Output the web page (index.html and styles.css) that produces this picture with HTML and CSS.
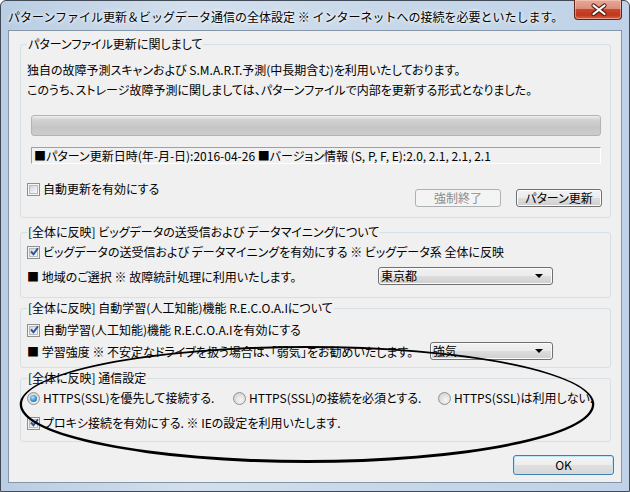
FILE: index.html
```html
<!DOCTYPE html>
<html lang="ja">
<head>
    <meta charset="UTF-8">
    <title>パターンファイル更新＆ビッグデータ通信の全体設定</title>
    <link rel="stylesheet" href="styles.css">
</head>
<body>
<div class="window">
    <div class="titlebar">
        <span class="title">パターンファイル更新＆ビッグデータ通信の全体設定 ※ インターネットへの接続を必要といたします。</span>
        <div class="close">
            <svg width="48" height="19" viewBox="0 0 48 19">
                <path d="M18.5 5.5 L29.5 14 M29.5 5.5 L18.5 14" stroke="#5a1d12" stroke-width="4.2" stroke-linecap="round"/>
                <path d="M18.5 5.5 L29.5 14 M29.5 5.5 L18.5 14" stroke="#ffffff" stroke-width="2.2" stroke-linecap="round"/>
            </svg>
        </div>
    </div>

    <div class="client">
        <fieldset class="group g-pattern">
            <legend>パターンファイル更新に関しまして</legend>
            <p class="line first">独自の故障予測スキャンおよび S.M.A.R.T.予測(中長期含む)を利用いたしております。</p>
            <p class="line">このうち、ストレージ故障予測に関しましては、パターンファイルで内部を更新する形式となりました。</p>
            <div class="progress"></div>
            <div class="status">■パターン更新日時(年-月-日):2016-04-26 ■バージョン情報 (S, P, F, E):2.0, 2.1, 2.1, 2.1</div>
            <div class="actions">
                <label class="check"><span class="box"></span>自動更新を有効にする</label>
                <div class="buttons">
                    <button class="btn" disabled>強制終了</button>
                    <button class="btn">パターン更新</button>
                </div>
            </div>
        </fieldset>

        <fieldset class="group g-data">
            <legend>[全体に反映] ビッグデータの送受信および データマイニングについて</legend>
            <div class="row r1">
                <label class="check"><span class="box checked"></span>ビッグデータの送受信および データマイニングを有効にする ※ ビッグデータ系 全体に反映</label>
            </div>
            <div class="row r2">
                <span>■ 地域のご選択 ※ 故障統計処理に利用いたします。</span>
                <div class="combo wide">東京都<span class="arrow"></span></div>
            </div>
        </fieldset>

        <fieldset class="group g-ai">
            <legend>[全体に反映] 自動学習(人工知能)機能 R.E.C.O.A.Iについて</legend>
            <div class="row r1">
                <label class="check"><span class="box checked"></span>自動学習(人工知能)機能 R.E.C.O.A.Iを有効にする</label>
            </div>
            <div class="row r2">
                <span>■ 学習強度 ※ 不安定なドライブを扱う場合は、「弱気」をお勧めいたします。</span>
                <div class="combo narrow">強気<span class="arrow"></span></div>
            </div>
        </fieldset>

        <fieldset class="group g-net">
            <legend>[全体に反映] 通信設定</legend>
            <div class="row r1 radios">
                <label class="option"><span class="radio on"></span>HTTPS(SSL)を優先して接続する.</label>
                <label class="option"><span class="radio"></span>HTTPS(SSL)の接続を必須とする.</label>
                <label class="option"><span class="radio"></span>HTTPS(SSL)は利用しない.</label>
            </div>
            <div class="row r2">
                <label class="check"><span class="box checked"></span>プロキシ接続を有効にする. ※ IEの設定を利用いたします.</label>
            </div>
        </fieldset>

        <div class="footer">
            <button class="btn ok">OK</button>
        </div>
    </div>

    <!-- hand drawn mark on the screenshot -->
    <svg class="mark" width="630" height="492" viewBox="0 0 630 492">
        <path fill-rule="evenodd" fill="#000"
              d="M19.7 404.5 a287.3 58.5 0 1 0 574.6 0 a287.3 58.5 0 1 0 -574.6 0 Z
                 M22 404 a285 56 0 1 0 570 0 a285 56 0 1 0 -570 0 Z"/>
    </svg>
</div>
</body>
</html>
```

FILE: styles.css
```css
html,body{
    margin: 0;
    padding: 0;
}
body{
    width: 630px;
    height: 492px;
    overflow: hidden;
    background: #ffffff;
    font-family: "Noto Sans CJK JP", "Noto Sans", sans-serif;
    font-size: 12px;
    color: #000;
    font-feature-settings: "palt";
}
.window{
    position: relative;
    box-sizing: border-box;
    width: 630px;
    height: 492px;
    border: 1px solid #404b57;
    border-radius: 6px 6px 0 0;
    background: linear-gradient(to right, #b9cde3 0, #d3dfec 30%, #c8d8e9 60%, #bfd2e7 100%);
    padding: 0 7px 8px 7px;
    display: flex;
    flex-direction: column;
}
.titlebar{
    height: 29px;
    display: flex;
    align-items: flex-start;
}
.title{
    padding-top: 7px;
    line-height: 18px;
    font-size: 12px;
    font-feature-settings: normal;
    text-shadow: 0 0 5px #fff, 0 0 3px #fff;
}
.close{
    margin-left: auto;
    margin-top: -1px;
    width: 48px;
    height: 20px;
    box-sizing: border-box;
    border: 1px solid #5e2418;
    border-top: none;
    border-radius: 0 0 4px 4px;
    background: linear-gradient(to bottom, #e6a999 0, #dc8e7c 45%, #c8462c 50%, #c2371b 80%, #d8684b 100%);
    box-shadow: inset 0 0 0 1px rgba(255,210,200,0.5);
}
.close svg{
    display: block;
}
.client{
    flex: 1;
    background: #f0f0f0;
    border: 1px solid #8596a8;
    display: flex;
    flex-direction: column;
}

/* group boxes */
.group{
    margin: 0 10px 0 11px;
    padding: 0 8px 0 6px;
    border: 1px solid #d5dfe5;
    border-radius: 3px;
    min-width: 0;
}
.group legend{
    padding: 0 1px;
    line-height: 16px;
}
.g-pattern{ margin-top: 5px; padding-bottom: 9px; }
.g-data{ margin-top: 6px; padding-bottom: 11px; }
.g-ai{ margin-top: 2px; padding-bottom: 6px; }
.g-net{ margin-top: 2px; padding-bottom: 8px; }

.line{
    margin: 0;
    line-height: 20px;
    white-space: nowrap;
}
.line.first{ margin-top: 8px; }

.progress{
    margin: 15px 1px 0 4px;
    height: 21px;
    box-sizing: border-box;
    border: 1px solid #b4b4b4;
    border-radius: 3px;
    background: linear-gradient(to bottom, #eeeeee 0, #d2d2d2 20%, #c6c6c6 60%, #cdcdcd 100%);
}
.status{
    margin: 11px 1px 0 4px;
    height: 17px;
    box-sizing: border-box;
    border: 1px solid #ffffff;
    border-top-color: #a0a0a0;
    border-left-color: #a0a0a0;
    padding-left: 2px;
    line-height: 15px;
    white-space: nowrap;
}
.actions{
    margin-top: 16px;
    height: 28px;
    display: flex;
    justify-content: space-between;
}
.actions .check{
    align-self: flex-start;
    margin-top: 1px;
}
.buttons{
    align-self: flex-end;
    margin-bottom: 1px;
    display: flex;
    gap: 15px;
}

/* rows */
.row{
    height: 20px;
    display: flex;
    align-items: center;
    white-space: nowrap;
}
.g-data .r1{ margin-top: 2px; }
.g-data .r2{ margin-top: 4px; }
.g-ai .r1{ margin-top: 4px; }
.g-ai .r2{ margin-top: 1px; }
.g-net .r1{ margin-top: 2px; }
.g-net .r2{ margin-top: 5px; }

.check, .option{
    display: flex;
    align-items: center;
    gap: 3px;
    line-height: 16px;
}
.box{
    width: 13px;
    height: 13px;
    box-sizing: border-box;
    border: 1px solid #8f8f8f;
    background: #f4f4f4;
    position: relative;
    flex: none;
}
.box::before{
    content: "";
    position: absolute;
    left: 1px;
    top: 1px;
    width: 9px;
    height: 9px;
    box-sizing: border-box;
    border: 1px solid #b8bcc2;
    background: linear-gradient(135deg, #cfd3d8 0, #e6e8eb 50%, #f8f8f8 100%);
}
.box.checked::after{
    content: "";
    position: absolute;
    left: 2px;
    top: 0px;
    width: 9px;
    height: 9px;
    background: url("data:image/svg+xml;utf8,<svg xmlns='http://www.w3.org/2000/svg' width='9' height='9'><path d='M1 4.5 L3.5 7.2 L8 1.2' fill='none' stroke='%23304e95' stroke-width='1.9'/></svg>") no-repeat;
}
.radios{
    display: grid;
    grid-template-columns: 206px 205px auto;
}
.radio{
    width: 13px;
    height: 13px;
    box-sizing: border-box;
    border: 1px solid #909090;
    border-radius: 50%;
    background: radial-gradient(circle at 60% 65%, #f6f6f6 0, #dcdcdc 60%, #cfcfcf 100%);
    position: relative;
    flex: none;
}
.radio.on::after{
    content: "";
    position: absolute;
    left: 2px;
    top: 2px;
    width: 7px;
    height: 7px;
    border-radius: 50%;
    background: radial-gradient(circle at 40% 35%, #bfe7fb 0, #3d97d8 50%, #135b9e 100%);
}

/* combo boxes */
.combo{
    margin-left: auto;
    margin-right: 49px;
    height: 18px;
    box-sizing: border-box;
    border: 1px solid #707070;
    border-radius: 3px;
    background: linear-gradient(to bottom, #f2f2f2 0, #ebebeb 50%, #dddddd 50%, #cfcfcf 100%);
    box-shadow: inset 0 0 0 1px #fbfbfb;
    padding-left: 2px;
    line-height: 16px;
    position: relative;
}
.combo.wide{ width: 175px; }
.combo.narrow{ width: 123px; }
.arrow{
    position: absolute;
    right: 9px;
    top: 6px;
    border-left: 4px solid transparent;
    border-right: 4px solid transparent;
    border-top: 4px solid #000;
}

/* buttons */
.btn{
    width: 86px;
    height: 18px;
    padding: 0;
    font: inherit;
    line-height: 16px;
    color: #000;
    border: 1px solid #707070;
    border-radius: 3px;
    background: linear-gradient(to bottom, #f2f2f2 0, #ebebeb 50%, #dddddd 50%, #cfcfcf 100%);
    box-shadow: inset 0 0 0 1px #fcfcfc;
}
.btn:disabled{
    color: #8d8d8d;
    border-color: #adb2b5;
    background: #f4f4f4;
    box-shadow: none;
}
.footer{
    margin-top: 13px;
    display: flex;
    justify-content: flex-end;
    padding-right: 7px;
}
.btn.ok{
    width: 101px;
    height: 20px;
    border-color: #3c7fb1;
    box-shadow: inset 0 0 0 1px #bfe4f8;
    background: linear-gradient(to bottom, #f4f4f4 0, #ededed 50%, #e0e0e0 50%, #d6d6d6 100%);
}

.mark{
    position: absolute;
    left: -1px;
    top: -1px;
    pointer-events: none;
}
```
